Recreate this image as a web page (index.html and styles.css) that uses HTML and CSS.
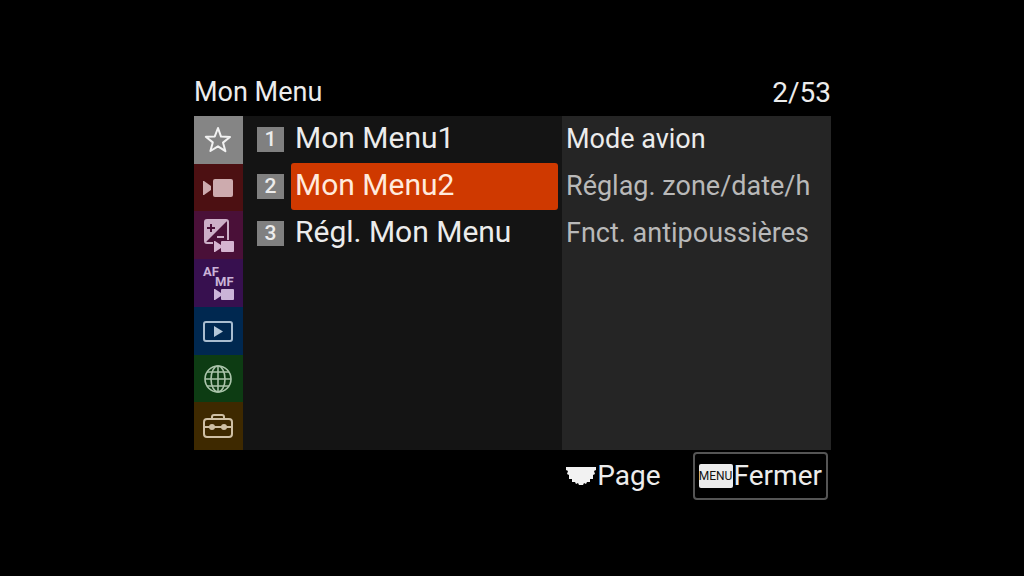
FILE: index.html
```html
<!DOCTYPE html>
<html lang="fr">
<head>
  <meta charset="UTF-8">
  <title>Mon Menu</title>
  <link rel="stylesheet" href="styles.css">
</head>
<body>
  <header class="top">
    <h1>Mon Menu</h1>
    <span class="counter">2/53</span>
  </header>

  <main class="panel">
    <nav class="tabs">
      <a href="#favoris" class="tab tab-star" aria-label="Mon Menu">
        <svg width="32" height="32" viewBox="0 0 32 32" fill="none" stroke="#f2f2f2" stroke-width="2" stroke-linejoin="round"><path d="M16 4l3 8.600 9 .4-7 5.600 2.400 8.600-7.400-4.900L8.400 27l2.400-8.600-7-5.600 9-.4z"/></svg>
      </a>
      <a href="#video" class="tab tab-shoot" aria-label="Prise de vue">
        <svg width="32" height="32" viewBox="0 0 32 32" fill="#cdabae"><rect x="11" y="7" width="20" height="18" rx="2"/><path d="M1 9h1l7 5v4l-7 5H1z"/></svg>
      </a>
      <a href="#exposition" class="tab tab-expo" aria-label="Exposition">
        <svg width="32" height="34" viewBox="0 0 32 34"><path d="M12 25H5q-2 0-2-2V4q0-2 2-2h19q2 0 2 2v18" fill="none" stroke="#cdb0c8" stroke-width="2"/><path d="M25 3L3 25V4q0-1 1-1z" fill="#cdb0c8"/><path d="M5 10h8M9 6v8" stroke="#4a1038" stroke-width="2"/><path d="M15 19h7" stroke="#cdb0c8" stroke-width="2"/><path d="M11 22h21v12H11z" fill="#4a1038"/><rect x="19" y="23" width="13" height="11" rx="1" fill="#d5b4d0"/><path d="M12 23h1l6 4v3l-6 4h-1z" fill="#d5b4d0"/></svg>
      </a>
      <a href="#map" class="tab tab-focus" aria-label="Mise au point">
        <svg width="32" height="38" viewBox="0 0 32 38" fill="#cbb4d8"><text class="focus-text" x="1" y="12">AF</text><text class="focus-text" x="13" y="22">MF</text><rect x="19" y="25" width="13" height="11" rx="1"/><path d="M12 25h1l6 4v3l-6 4h-1z"/></svg>
      </a>
      <a href="#lecture" class="tab tab-play" aria-label="Lecture">
        <svg width="32" height="32" viewBox="0 0 32 32"><rect x="2" y="7" width="28" height="19" rx="2" fill="none" stroke="#a9bdd0" stroke-width="2"/><path d="M12 11v11l9-5.500z" fill="#b4c7d8"/></svg>
      </a>
      <a href="#reseau" class="tab tab-net" aria-label="Réseau">
        <svg width="32" height="32" viewBox="0 0 32 32" fill="none" stroke="#abc4ab" stroke-width="1.600"><circle cx="16" cy="17" r="13"/><ellipse cx="16" cy="17" rx="7" ry="13"/><path d="M16 4v26M3 17h26M5 10h22M5 24h22"/></svg>
      </a>
      <a href="#reglages" class="tab tab-setup" aria-label="Réglages">
        <svg width="32" height="32" viewBox="0 0 32 32" fill="none" stroke="#cfc0a5" stroke-width="2"><rect x="2" y="9" width="28" height="18" rx="3"/><path d="M10 9V7q0-2 2-2h8q2 0 2 2v2M2 17h6M12 17h8M24 17h6"/><circle cx="10" cy="17" r="2" fill="#cfc0a5"/><circle cx="22" cy="17" r="2" fill="#cfc0a5"/></svg>
      </a>
    </nav>

    <ol class="pages">
      <li><span class="num">1</span><a href="#menu1">Mon Menu1</a></li>
      <li><span class="num">2</span><a href="#menu2" class="selected">Mon Menu2</a></li>
      <li><span class="num">3</span><a href="#regl">Régl. Mon Menu</a></li>
    </ol>

    <ul class="items">
      <li class="current">Mode avion</li>
      <li>Réglag. zone/date/h</li>
      <li>Fnct. antipoussières</li>
    </ul>
  </main>

  <footer class="bottom">
    <span class="hint">
      <svg width="32" height="20" viewBox="0 0 32 20" fill="#f2f2f2"><path d="M1 1h30v3l-2 1 1 3-2 1 0 4-3 0 0 3-3 0-1 2-2-1-1 2h-4l-1-2-2 1-1-2-3 0 0-3-3 0 0-4-2-1 1-3-2-1z"/></svg>
      Page
    </span>
    <button class="close" type="button"><span class="menu-key">MENU</span>Fermer</button>
  </footer>
</body>
</html>
```
FILE: styles.css
```css
:root {
  --text: #ececec;
  --muted: #b9b9b9;
  --accent: #cf3900;
}
* { box-sizing: border-box; margin: 0; padding: 0; }
body {
  display: flex;
  flex-direction: column;
  min-height: 100vh;
  padding: 0 193px 0 194px;
  background: #000;
  color: var(--text);
  font-family: Roboto, sans-serif;
}
a { color: inherit; text-decoration: none; }
ol, ul { list-style: none; }
svg { display: block; }

.top {
  display: flex;
  justify-content: space-between;
  padding-top: 70px;
  height: 116px;
  font-size: 28px;
  line-height: 45px;
}
.top h1 { font-size: 27px; font-weight: 400; }

.panel { flex: 1; display: flex; }

.tabs {
  width: 49px;
  display: grid;
  grid-auto-rows: 1fr;
}
.tab {
  display: flex;
  align-items: center;
  padding-left: 8px;
}
.tab-star { background: #858585; }
.tab-shoot { background: #4c1012; }
.tab-expo { background: #4a1038; }
.tab-focus { background: #37104f; }
.tab-play { background: #002850; }
.tab-net { background: #0d3c13; }
.tab-setup { background: #3e2900; }
.focus-text { font-size: 13px; font-weight: 700; }

.pages {
  flex: 1;
  padding: 0 4px 0 14px;
  background: #141414;
}
.pages li {
  display: flex;
  align-items: center;
  gap: 7px;
  height: 47px;
}
.num {
  width: 27px;
  background: #808080;
  font-size: 21px;
  font-weight: 500;
  line-height: 25px;
  text-align: center;
}
.pages a {
  flex: 1;
  padding: 0 0 3px 4px;
  border-radius: 3px;
  font-size: 30px;
  line-height: 44px;
}
.pages .selected { background: var(--accent); color: #ffeadd; }

.items {
  width: 269px;
  padding-left: 4px;
  background: #252525;
  color: var(--muted);
  font-size: 27px;
  line-height: 47px;
  white-space: nowrap;
}
.items .current { color: var(--text); }

.bottom {
  display: flex;
  justify-content: flex-end;
  gap: 32px;
  height: 126px;
  padding: 2px 3px 0 0;
  font-size: 28px;
  line-height: 48px;
}
.hint { display: flex; align-items: center; height: 48px; }
.close {
  display: flex;
  align-items: center;
  height: 48px;
  padding: 0 4px;
  border: 2px solid #555;
  border-radius: 4px;
  background: none;
  color: inherit;
  font: inherit;
}
.menu-key {
  width: 34px;
  margin-right: 1px;
  border-radius: 2px;
  background: #ececec;
  color: #111;
  font-size: 12px;
  line-height: 24px;
  text-align: center;
}
```
